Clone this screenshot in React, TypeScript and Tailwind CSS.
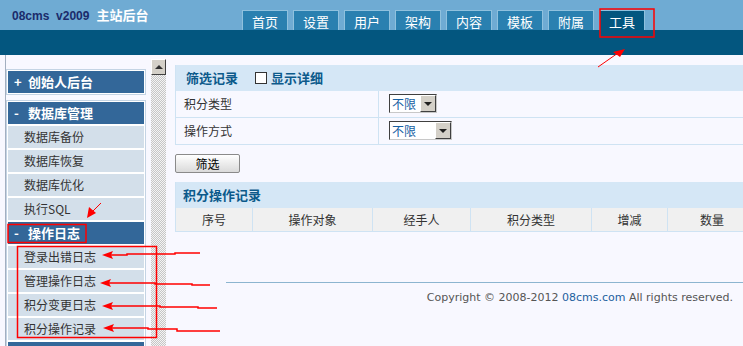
import React from 'react';

const tabs = ['首页', '设置', '用户', '架构', '内容', '模板', '附属', '工具'];

const Header: React.FC = () => (
  <div>
    <div className="h-[30px] bg-[#6fabd3] flex">
      <div className="w-[242px] pl-[12px] pt-[7px] text-[12px] leading-[16px] font-bold whitespace-nowrap">
        <span className="font-['Liberation_Sans',sans-serif] text-[#1b2b6b]">08cms&nbsp; v2009</span>
        <span className="ml-[7px] text-[13px] text-white">主站后台</span>
      </div>
      <div className="flex items-end gap-[5px]">
        {tabs.map((t, i) => (
          <div
            key={t}
            className={
              'h-[20px] w-[46px] border border-b-0 border-[#8fc1de] text-white text-[13px] flex items-center justify-center pt-[2px] ' +
              (i === tabs.length - 1 ? 'bg-[#03567f]' : 'bg-[#2a80b0]')
            }
          >
            {t}
          </div>
        ))}
      </div>
    </div>
    <div className="h-[25px] bg-[#03567f]" />
  </div>
);

const MenuHead: React.FC<{ sign?: string; label?: string }> = ({ sign, label }) => (
  <div className="h-[22px] shrink-0 bg-[#336799] text-white font-bold text-[13px] flex items-center pl-[6px]">
    <span className="w-[14px]">{sign}</span>
    <span>{label}</span>
  </div>
);

const MenuItem: React.FC<{ label: string }> = ({ label }) => (
  <div className="h-[22px] bg-[#d3dfea] text-[12px] text-[#333] flex items-center pl-[16px]">{label}</div>
);

const Sidebar: React.FC = () => (
  <div className="w-[141px] ml-[5px] border-l border-[#a3afc0] pt-[14px] shrink-0">
    <div className="border border-[#c4d4e4] p-px bg-white">
      <MenuHead sign="+" label="创始人后台" />
    </div>
    <div className="mt-[5px] border border-[#c4d4e4] p-px bg-white flex flex-col gap-[2px]">
      <MenuHead sign="-" label="数据库管理" />
      <MenuItem label="数据库备份" />
      <MenuItem label="数据库恢复" />
      <MenuItem label="数据库优化" />
      <MenuItem label="执行SQL" />
      <MenuHead sign="-" label="操作日志" />
      <MenuItem label="登录出错日志" />
      <MenuItem label="管理操作日志" />
      <MenuItem label="积分变更日志" />
      <MenuItem label="积分操作记录" />
      <MenuHead />
    </div>
  </div>
);

const Scrollbar: React.FC = () => (
  <div className="w-[15px] ml-[5px] mt-[4px] shrink-0 bg-[repeating-conic-gradient(#c6c6c6_0_25%,#f4f4f4_0_50%)] bg-[length:2px_2px]">
    <div className="h-[16px] bg-[#d4d0c8] border border-t-white border-l-white border-r-[#404040] border-b-[#404040] flex items-center justify-center">
      <div className="w-0 h-0 border-x-[4px] border-x-transparent border-b-[4px] border-b-[#303030]" />
    </div>
  </div>
);

const Select: React.FC<{ w: string }> = ({ w }) => (
  <div className={'h-[19px] ml-[10px] mt-[3px] flex border border-t-[#404040] border-l-[#404040] border-r-[#c8c8c8] border-b-[#c8c8c8] bg-white ' + w}>
    <span className="flex-1 text-[12px] leading-[17px] text-[#1660a3] pl-[2px]">不限</span>
    <div className="w-[16px] h-[17px] bg-[#d4d0c8] border border-t-white border-l-white border-r-[#404040] border-b-[#404040] flex items-center justify-center">
      <div className="w-0 h-0 border-x-[4px] border-x-transparent border-t-[4px] border-t-[#202020]" />
    </div>
  </div>
);

const cols = ['序号', '操作对象', '经手人', '积分类型', '增减', '数量'];

const Main: React.FC = () => (
  <div className="ml-[9px] flex-1 min-w-0 overflow-hidden pt-[10px]">
    <div className="w-[580px] border-l border-[#cfe3f3]">
      <div className="h-[26px] bg-[#d5e7f6] flex items-center pl-[10px] text-[13px] font-bold text-[#0c5a8b]">
        <span>筛选记录</span>
        <span className="ml-[17px] w-[12px] h-[12px] bg-white border border-[#333]" />
        <span className="ml-[4px]">显示详细</span>
      </div>
      {['积分类型', '操作方式'].map((label, i) => (
        <div key={label} className="h-[27px] grid grid-cols-[203px_1fr] border-b border-[#cfe3f3]">
          <div className="border-r border-[#cfe3f3] pl-[8px] text-[12px] text-[#333] flex items-center">{label}</div>
          <div>
            <Select w={i === 0 ? 'w-[48px]' : 'w-[63px]'} />
          </div>
        </div>
      ))}
    </div>
    <button className="mt-[9px] w-[65px] h-[19px] border border-[#8a8a8a] rounded-[2px] bg-gradient-to-b from-white to-[#dadada] text-[12px] text-black leading-[17px]">
      筛选
    </button>
    <div className="mt-[8px] w-[580px] border-l border-[#cfe3f3]">
      <div className="h-[26px] bg-[#d5e7f6] flex items-center pl-[7px] text-[13px] font-bold text-[#0c5a8b]">积分操作记录</div>
      <div className="h-[24px] grid grid-cols-[77px_120px_98px_121px_76px_88px] bg-[#f0f0f0] border-b border-[#cfe3f3]">
        {cols.map((c, i) => (
          <div
            key={c}
            className={'flex items-center justify-center text-[12px] text-[#333] ' + (i < cols.length - 1 ? 'border-r border-[#cfe3f3]' : '')}
          >
            {c}
          </div>
        ))}
      </div>
    </div>
    <div className="mt-[50px] ml-[51px] border-t border-[#8cb5d0] pt-[7px] pr-[10px] text-right font-['DejaVu_Sans',sans-serif] text-[11px] text-[#555] whitespace-nowrap">
      Copyright © 2008-2012 <span className="text-[#1d5f9e]">08cms.com</span> All rights reserved.
    </div>
  </div>
);

const ArrowL: React.FC<{ x: number; y: number; pts: string }> = ({ x, y, pts }) => (
  <g>
    <polygon points={`${x},${y} ${x + 11},${y - 4} ${x + 9},${y} ${x + 11},${y + 4}`} fill="#ff0000" />
    <polyline points={pts} fill="none" stroke="#ff0000" strokeWidth="1.5" />
  </g>
);

const Annotations: React.FC = () => (
  <svg className="absolute inset-0 pointer-events-none" width="743" height="346" viewBox="0 0 743 346">
    <rect x="600" y="9" width="54" height="28" fill="none" stroke="#ff0000" strokeWidth="1.5" />
    <line x1="598" y1="67" x2="618" y2="53" stroke="#ff0000" strokeWidth="1" />
    <polygon points="625,49 613,52 620,57" fill="#ff0000" />
    <line x1="101" y1="203" x2="91" y2="213" stroke="#ff0000" strokeWidth="1" />
    <polygon points="87,218 89,207 96,213" fill="#ff0000" />
    <rect x="8" y="224.5" width="78" height="18" fill="none" stroke="#ff0000" strokeWidth="1.5" />
    <rect x="17.5" y="246.5" width="139" height="91" fill="none" stroke="#ff0000" strokeWidth="1.5" />
    <ArrowL x={102} y={255} pts="110,255 127,255 127,254 175,254 175,253 200,253" />
    <ArrowL x={100} y={283} pts="108,283 155,283 155,284 192,284 192,285 210,285" />
    <ArrowL x={102} y={306} pts="110,306 160,306 160,307 198,307 198,308 217,308" />
    <ArrowL x={103} y={328} pts="111,328 148,328 148,329 177,329 177,331 220,331" />
  </svg>
);

export default function App() {
  return (
    <div className="relative w-[743px] h-[346px] overflow-hidden bg-[#f8f8ff] font-['Noto_Sans_CJK_SC',sans-serif]">
      <Header />
      <div className="flex h-[291px]">
        <Sidebar />
        <Scrollbar />
        <Main />
      </div>
      <Annotations />
    </div>
  );
}
